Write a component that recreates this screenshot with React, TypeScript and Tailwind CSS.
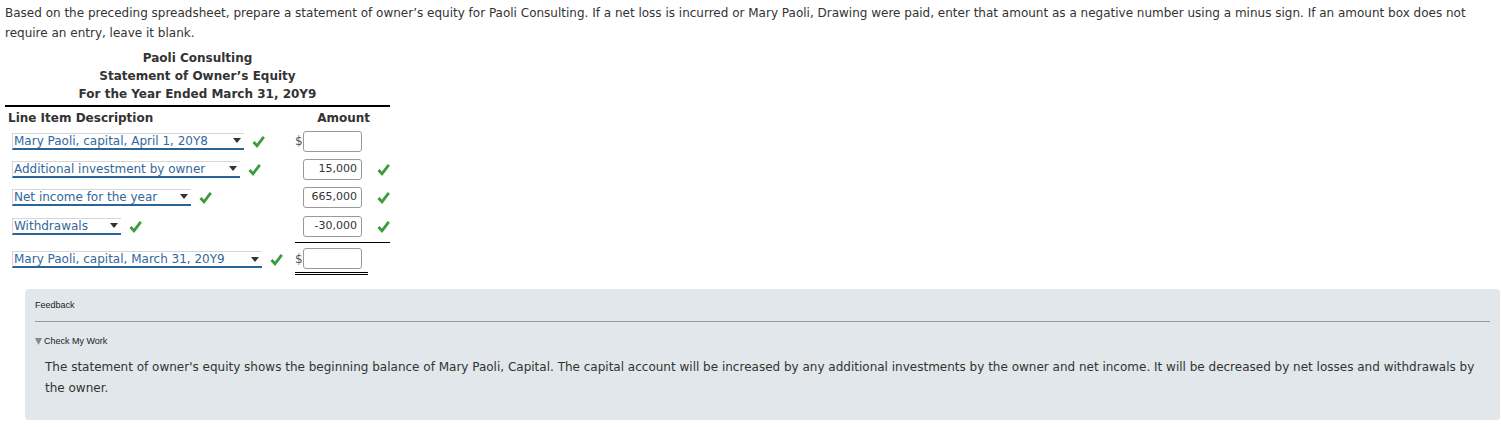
import React from "react"

const font = { fontFamily: '"DejaVu Sans", Verdana, sans-serif' }
const arial = { fontFamily: '"Liberation Sans", Arial, sans-serif' }

function Check({ className = "" }: { className?: string }) {
  return (
    <svg className={className} width="13" height="13" viewBox="0 0 13 13">
      <path d="M1.5 7 L5 10.8 L11.8 1.8" fill="none" stroke="#3c9b3c" strokeWidth="2.8" />
    </svg>
  )
}

type Row = {
  label: string
  width: number
  value?: string
  dollar?: boolean
  rowCheck?: boolean
  line?: "single" | "double"
}

const rows: Row[] = [
  { label: "Mary Paoli, capital, April 1, 20Y8", width: 232, dollar: true },
  { label: "Additional investment by owner", width: 228, value: "15,000", rowCheck: true },
  { label: "Net income for the year", width: 179, value: "665,000", rowCheck: true },
  { label: "Withdrawals", width: 109, value: "-30,000", rowCheck: true, line: "single" },
  { label: "Mary Paoli, capital, March 31, 20Y9", width: 250, dollar: true, line: "double" },
]

function FakeSelect({ label, width }: { label: string; width: number }) {
  return (
    <div
      className="flex h-[17px] items-center justify-between border-t border-l border-[#d6d6d6] border-b-2 border-b-[#2b6496] text-[12px] leading-none text-[#34679c]"
      style={{ width }}
    >
      <span className="pl-[1px]">{label}</span>
      <svg width="8" height="5" viewBox="0 0 8 5" className="mr-[3px]">
        <path d="M0 0 H8 L4 5 Z" fill="#333" />
      </svg>
    </div>
  )
}

export default function App() {
  return (
    <div className="min-h-[427px] bg-white text-[#333]" style={font}>
      <p className="px-[5px] pt-[3px] text-[12px] leading-[20px]">
        Based on the preceding spreadsheet, prepare a statement of owner’s equity for Paoli Consulting. If a net loss is incurred or Mary Paoli, Drawing were paid, enter that amount as a negative number using a minus sign. If an amount box does not require an entry, leave it blank.
      </p>

      <div className="ml-[5px] mt-[6px] w-[385px]">
        <div className="border-b-2 border-black pb-[2px] text-center text-[12px] font-bold leading-[18px]">
          <div>Paoli Consulting</div>
          <div>Statement of Owner’s Equity</div>
          <div>For the Year Ended March 31, 20Y9</div>
        </div>

        <div className="flex h-[20px] items-center pt-[2px] text-[12px] font-bold">
          <div className="flex-1 pl-[3px]">Line Item Description</div>
          <div className="w-[95px] pr-[20px] text-right">Amount</div>
        </div>

        {rows.map((r) => (
          <div
            key={r.label}
            className={`flex ${
              r.line === "double" ? "h-[34px] items-start pt-[5px]" : r.line === "single" ? "h-[32px] items-center pb-[2px]" : "h-[28px] items-center"
            }`}
          >
            <div className={`flex flex-1 items-center pl-[7px] ${r.line === "double" ? "mt-[3px]" : ""}`}>
              <FakeSelect label={r.label} width={r.width} />
              <Check className="ml-[8px]" />
            </div>
            <div
              className={`flex w-[95px] items-center self-stretch ${
                r.line === "single" ? "-mb-[2px] border-b border-black" : ""
              }`}
            >
              <div
                className={`flex items-center ${
                  r.line === "double" ? "w-[73px] self-start border-b-[3px] border-double border-black pb-[3px]" : ""
                }`}
              >
                <span className="w-[8px] text-[12px] text-[#555]">{r.dollar ? "$" : ""}</span>
                <div className="flex h-[21px] w-[59px] items-center justify-end rounded-[3px] border border-[#999] pr-[4px] text-[11px] text-[#333]">
                  {r.value}
                </div>
              </div>
              {r.rowCheck && <Check className="ml-[15px]" />}
            </div>
          </div>
        ))}
      </div>

      <div className="ml-[25px] mr-[1px] mt-[12px] rounded-[4px] bg-[#e1e7ea] px-[10px] pb-[21px] pt-[10px]">
        <div className="border-b border-[#999] pb-[8px] text-[9px] text-[#222]" style={arial}>
          Feedback
        </div>
        <div className="mt-[13px] flex items-center text-[9px] text-[#222]" style={arial}>
          <svg width="7" height="7" viewBox="0 0 7 7" className="mr-[2px]">
            <path d="M0 0 H7 L3.5 7 Z" fill="#888" />
          </svg>
          Check My Work
        </div>
        <p className="mt-[9px] px-[10px] text-[12px] leading-[21px] text-[#333]">
          The statement of owner's equity shows the beginning balance of Mary Paoli, Capital. The capital account will be increased by any additional investments by the owner and net income. It will be decreased by net losses and withdrawals by the owner.
        </p>
      </div>
    </div>
  )
}
